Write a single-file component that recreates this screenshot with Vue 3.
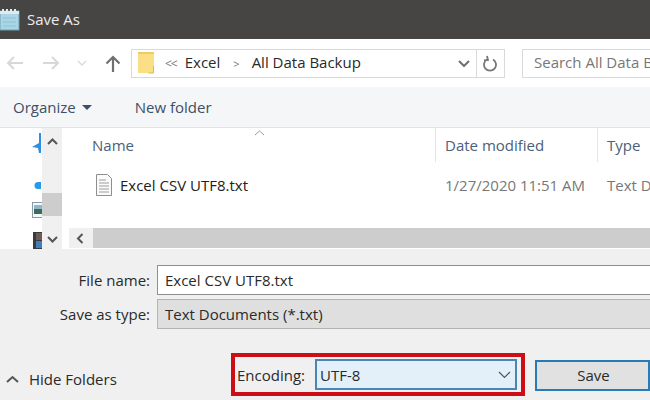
<template>
  <div class="dialog">
    <div class="titlebar">
      <svg class="note-icon" width="20" height="24" viewBox="0 0 20 24">
        <rect x="0" y="4" width="19" height="19" fill="#a9d6e6" stroke="#6f9fb0" />
        <rect x="0" y="4" width="19" height="3" fill="#dfe9ee" />
        <path d="M3 2v4M7 2v4M11 2v4M15 2v4" stroke="#e8e8e8" stroke-width="2" />
        <path d="M3 11h13M3 15h13M3 19h13" stroke="#8dc0d2" />
      </svg>
      <span>Save As</span>
    </div>

    <div class="navbar">
      <div class="nav-buttons">
        <svg width="18" height="16" viewBox="0 0 18 16"><path d="M17 8H2M8 2L2 8l6 6" fill="none" stroke="#d8d8d8" stroke-width="2" /></svg>
        <svg width="18" height="16" viewBox="0 0 18 16"><path d="M1 8h15M10 2l6 6-6 6" fill="none" stroke="#d8d8d8" stroke-width="2" /></svg>
        <svg width="10" height="6" viewBox="0 0 10 6"><path d="M1 1l4 4 4-4" fill="none" stroke="#d8d8d8" stroke-width="1.3" /></svg>
        <svg width="16" height="17" viewBox="0 0 16 17"><path d="M8 17V2M1.5 8.5L8 2l6.500 6.500" fill="none" stroke="#707070" stroke-width="2.200" /></svg>
      </div>
      <div class="address">
        <svg class="folder" width="17" height="22" viewBox="0 0 17 22">
          <rect x="0" y="0" width="16" height="21" fill="#fbdf86" />
          <path d="M15.500 14v7h-5" fill="none" stroke="#d9b85a" />
          <rect x="0" y="0" width="16" height="2" fill="#eecb62" />
        </svg>
        <span class="crumb-more">&lt;&lt;</span>
        <span class="crumb">Excel</span>
        <span class="crumb-sep">&gt;</span>
        <span class="crumb">All Data Backup</span>
        <span class="spacer"></span>
        <svg class="addr-chevron" width="12" height="7" viewBox="0 0 12 7"><path d="M1 1l5 5 5-5" fill="none" stroke="#6f6f6f" stroke-width="2" /></svg>
        <div class="refresh">
          <svg width="15" height="17" viewBox="0 0 15 17"><path d="M4 4.500a6 6 0 1 0 6 0M4 1l1 4-4 .5" fill="none" stroke="#777" stroke-width="1.800" /></svg>
        </div>
      </div>
      <div class="search">Search All Data Backup</div>
    </div>

    <div class="commands">
      <span class="cmd organize">Organize <i class="caret"></i></span>
      <span class="cmd">New folder</span>
    </div>

    <div class="browser">
      <div class="sidebar">
        <div class="side-icons">
          <svg class="pin" width="10" height="20" viewBox="0 0 10 20"><path d="M8 0h2v20H8l-1-5-6-1 7-4z" fill="#2d8fe0" /></svg>
          <svg class="dot" width="7" height="7" viewBox="0 0 7 7"><path d="M7 0v7H4a3.500 3.500 0 0 1 0-7z" fill="#2b9ae6" /></svg>
          <svg class="pic" width="10" height="16" viewBox="0 0 10 16">
            <rect x="0.500" y="0.500" width="12" height="15" fill="#f4f8fa" stroke="#8b9aa8" />
            <rect x="2" y="3" width="8" height="4" fill="#8db7cf" />
            <rect x="2" y="7" width="8" height="5" fill="#3f6a5a" />
          </svg>
          <svg class="film" width="9" height="17" viewBox="0 0 9 17">
            <rect width="9" height="17" fill="#3a3a3a" />
            <rect x="3" y="1" width="6" height="7" fill="#6d5a58" />
            <rect x="3" y="9" width="6" height="7" fill="#3f7fc0" />
          </svg>
        </div>
        <div class="vscroll">
          <svg width="11" height="7" viewBox="0 0 11 7"><path d="M1 6l4.500-4.500L10 6" fill="none" stroke="#555" stroke-width="2" /></svg>
          <div class="vthumb"></div>
          <svg width="11" height="7" viewBox="0 0 11 7"><path d="M1 1l4.500 4.500L10 1" fill="none" stroke="#555" stroke-width="2" /></svg>
        </div>
      </div>

      <div class="files">
        <div class="file-head">
          <div class="col col-name">
            Name
            <svg class="sort" width="11" height="6" viewBox="0 0 11 6"><path d="M1 5l4.500-4L10 5" fill="none" stroke="#9a9a9a" /></svg>
          </div>
          <div class="col col-date">Date modified</div>
          <div class="col col-type">Type</div>
        </div>
        <div class="file-row">
          <div class="col col-name file-name">
            <svg width="16" height="22" viewBox="0 0 16 22">
              <path d="M.5.5h11l4 4v17H.5z" fill="#fbfbfb" stroke="#8e8e8e" />
              <path d="M3 6h7M3 9h10M3 12h10M3 15h10M3 18h10" stroke="#9b9b9b" />
            </svg>
            Excel CSV UTF8.txt
          </div>
          <div class="col col-date muted">1/27/2020 11:51 AM</div>
          <div class="col col-type muted">Text Document</div>
        </div>
        <div class="hscroll">
          <svg width="8" height="11" viewBox="0 0 8 11"><path d="M6.500 1L2 5.500 6.500 10" fill="none" stroke="#555" stroke-width="2" /></svg>
          <div class="hthumb"></div>
        </div>
      </div>
    </div>

    <div class="form">
      <div class="field">
        <label>File name:</label>
        <div class="input">Excel CSV UTF8.txt</div>
      </div>
      <div class="field">
        <label>Save as type:</label>
        <div class="input readonly">Text Documents (*.txt)</div>
      </div>
    </div>

    <div class="footer">
      <div class="hide-folders">
        <svg width="13" height="8" viewBox="0 0 13 8"><path d="M1 7l5.500-5L12 7" fill="none" stroke="#555" stroke-width="2" /></svg>
        Hide Folders
      </div>
      <div class="encoding">
        <span>Encoding:</span>
        <div class="select">
          UTF-8
          <svg width="13" height="8" viewBox="0 0 13 8"><path d="M1 1l5.500 5.500L12 1" fill="none" stroke="#555" stroke-width="1.200" /></svg>
        </div>
      </div>
      <button class="save">Save</button>
    </div>
  </div>
</template>

<script setup>
</script>

<style>
html, body {
  margin: 0;
  overflow: hidden;
}
</style>

<style scoped>
.dialog {
  width: 650px;
  height: 400px;
  overflow: hidden;
  background: #f0f0f0;
  color: #2a2a2a;
  font-family: "Open Sans", "Liberation Sans", sans-serif;
  font-size: 15px;
  display: flex;
  flex-direction: column;
}

.titlebar {
  height: 39px;
  flex: none;
  background: #474543;
  color: #ececec;
  display: flex;
  align-items: center;
  gap: 7px;
  box-sizing: border-box;
  padding-bottom: 2px;
}

.navbar {
  height: 48px;
  flex: none;
  background: #fff;
  display: flex;
  align-items: center;
  box-sizing: border-box;
  padding-left: 6px;
  width: 720px;
}

.nav-buttons {
  display: flex;
  align-items: center;
  width: 125px;
  flex: none;
  justify-content: space-between;
  padding-right: 10px;
  box-sizing: border-box;
}

.address {
  width: 374px;
  height: 29px;
  flex: none;
  box-sizing: border-box;
  border: 1px solid #d9d9d9;
  display: flex;
  align-items: center;
  padding-left: 6px;
}

.crumb {
  padding-bottom: 2px;
}

.crumb-more {
  font-size: 12px;
  color: #777;
  margin: 0 8px 0 10px;
  letter-spacing: -1px;
}

.crumb-sep {
  font-size: 11px;
  color: #777;
  margin: 0 12px 0 13px;
}

.spacer {
  flex: 1;
}

.addr-chevron {
  margin-right: 6px;
}

.refresh {
  width: 27px;
  height: 100%;
  border-left: 1px solid #d9d9d9;
  display: flex;
  align-items: center;
  justify-content: center;
}

.search {
  margin-left: 17px;
  width: 200px;
  height: 29px;
  box-sizing: border-box;
  border: 1px solid #d9d9d9;
  padding-left: 11px;
  line-height: 25px;
  color: #777;
  white-space: nowrap;
}

.commands {
  height: 40px;
  flex: none;
  background: #f5f6f7;
  border-bottom: 1px solid #e3e4e6;
  display: flex;
  align-items: center;
  padding-left: 13px;
  gap: 43px;
  color: #3c5068;
}

.organize {
  display: flex;
  align-items: center;
  gap: 6px;
}

.caret {
  width: 0;
  height: 0;
  border-left: 5px solid transparent;
  border-right: 5px solid transparent;
  border-top: 5px solid #3c5068;
}

.browser {
  height: 121px;
  flex: none;
  background: #fff;
  display: flex;
}

.sidebar {
  width: 69px;
  flex: none;
  display: flex;
}

.side-icons {
  width: 42px;
  position: relative;
}

.side-icons svg {
  position: absolute;
}

.pin { left: 31px; top: 5px; }
.dot { left: 34px; top: 54px; }
.pic { left: 32px; top: 74px; }
.film { left: 33px; top: 104px; }

.vscroll {
  width: 20px;
  background: #f0f0f0;
  display: flex;
  flex-direction: column;
  align-items: center;
  justify-content: space-between;
  padding: 10px 0 6px;
  box-sizing: border-box;
  position: relative;
}

.vthumb {
  position: absolute;
  left: 0;
  right: 0;
  top: 65px;
  height: 23px;
  background: #cdcdcd;
}

.files {
  flex: 1;
  min-width: 0;
  display: flex;
  flex-direction: column;
}

.file-head {
  height: 34px;
  display: flex;
  color: #4c607a;
  flex: none;
}

.file-head .col {
  display: flex;
  align-items: center;
  border-right: 1px solid #e5e5e5;
  box-sizing: border-box;
  position: relative;
}

.col {
  flex: none;
  white-space: nowrap;
  box-sizing: border-box;
}

.col-name {
  width: 367px;
  padding-left: 23px;
}

.col-date {
  width: 162px;
  padding-left: 9px;
}

.col-type {
  width: 60px;
  padding-left: 9px;
}

.sort {
  position: absolute;
  left: 185px;
  top: 2px;
}

.file-row {
  height: 66px;
  display: flex;
  align-items: flex-start;
  flex: none;
}

.file-row .col {
  line-height: 24px;
  padding-top: 11px;
}

.file-name {
  display: flex;
  align-items: center;
  gap: 8px;
  padding-left: 27px;
  color: #222;
}

.muted {
  color: #777;
}

.hscroll {
  height: 20px;
  flex: none;
  display: flex;
  align-items: center;
  background: #f0f0f0;
  padding-left: 7px;
  gap: 9px;
}

.hthumb {
  flex: 1;
  height: 100%;
  background: #cdcdcd;
}

.form {
  flex: none;
  padding-top: 16px;
  display: flex;
  flex-direction: column;
  gap: 4px;
}

.field {
  display: flex;
  align-items: center;
  gap: 7px;
}

.field label {
  width: 150px;
  text-align: right;
}

.input {
  flex: 1;
  height: 30px;
  box-sizing: border-box;
  background: #fff;
  border: 1px solid #8f8f8f;
  border-right: none;
  padding-left: 7px;
  line-height: 28px;
}

.readonly {
  background: #dfdfdf;
  border-color: #b4b4b4;
}

.footer {
  flex: none;
  margin-top: 24px;
  height: 43px;
  display: flex;
  align-items: center;
  width: 720px;
}

.hide-folders {
  width: 231px;
  flex: none;
  padding-left: 6px;
  padding-top: 8px;
  box-sizing: border-box;
  display: flex;
  align-items: center;
  gap: 10px;
}

.encoding {
  width: 294px;
  height: 43px;
  flex: none;
  box-sizing: border-box;
  border: 4px solid #cc0f17;
  display: flex;
  align-items: center;
  padding-left: 2px;
  gap: 10px;
}

.select {
  width: 202px;
  height: 31px;
  box-sizing: border-box;
  border: 2px solid #4a86b4;
  background: #e3f0fa;
  display: flex;
  align-items: center;
  justify-content: space-between;
  padding: 0 4px 0 3px;
}

.save {
  margin-left: 10px;
  width: 115px;
  height: 31px;
  margin-top: 1px;
  box-sizing: border-box;
  border: 2px solid #2a7ab8;
  background: #e1e1e1;
  font: inherit;
  color: inherit;
  padding: 0 0 0 2px;
}
</style>
